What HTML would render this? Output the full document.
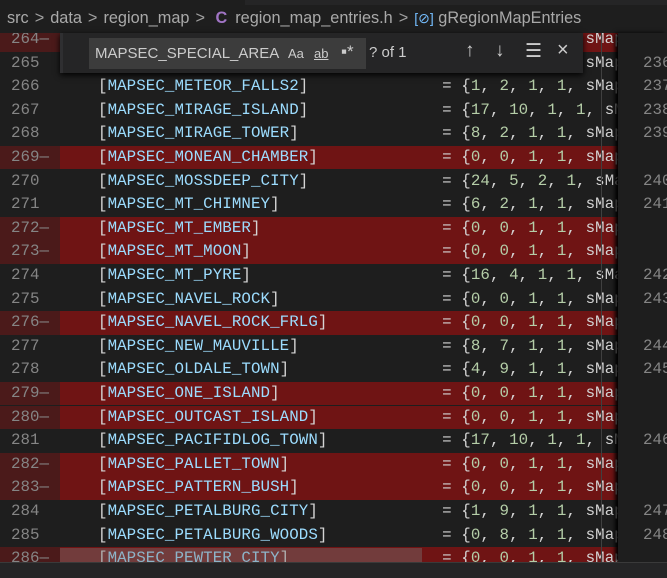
<!DOCTYPE html>
<html><head><meta charset="utf-8"><style>
*{margin:0;padding:0;box-sizing:border-box}
body{width:667px;height:578px;overflow:hidden;background:#1e1e1e;font-family:"Liberation Mono",monospace;position:relative}
#tabs{position:absolute;left:0;top:0;width:667px;height:5px;background:#252526}
#tabs2{position:absolute;left:0;top:0;width:245px;height:5px;background:#1e1e1e}
#bc{position:absolute;left:0;top:0;width:667px;height:33px;font-family:"Liberation Sans",sans-serif;font-size:16.3px;color:#a9a9a9;padding:9px 0 0 7px;white-space:nowrap}
#bc .s{color:#a0a0a0;margin:0 6px}
#bc .c{color:#a074c4;font-weight:bold;margin-right:8px}
#bc .v{color:#75beff;font-size:14px}
#ed{position:absolute;left:0;top:33px;width:618px;height:529px;overflow:hidden}
.row{position:absolute;left:0;width:618px;height:23.6px;font-size:15.8px;line-height:23.6px;white-space:pre;color:#d4d4d4;letter-spacing:0.08px}
.row .g{position:absolute;left:0;top:0;width:60px;height:100%;color:#858585;padding-left:11px;letter-spacing:0}
.row .t{position:absolute;left:98px;top:0}
.row.d{background:#6f1414}
.row.d .g{background:#4b1a1a}
.b{color:#d4d4d4}.i{color:#9cdcfe}.n{color:#b5cea8}
#ruler{position:absolute;left:601px;top:33px;width:1px;height:529px;background:#404040}
#rp{position:absolute;left:618px;top:33px;width:49px;height:529px;background:#1e1e1e;box-shadow:-3px 0 4px #000}
.rn{position:absolute;left:25px;font-size:15.8px;color:#858585;line-height:23.6px}
#find{position:absolute;left:60px;top:33px;width:523px;height:40px;background:#252526;border-left:3px solid #2f2f31;box-shadow:0 2px 6px #000}
#inp{position:absolute;left:26px;top:5px;width:277px;height:31px;background:#3c3c3c;font-family:"Liberation Sans",sans-serif;font-size:15px;color:#cccccc;padding:7px 0 0 6px}
.op{position:absolute;top:11px;font-family:"Liberation Sans",sans-serif;font-size:15px;color:#cccccc}
#sb{position:absolute;left:60px;top:548px;width:362px;height:14px;background:rgba(121,121,121,0.4)}
#hb{position:absolute;left:0;top:562px;width:667px;height:16px;background:#252526;border-top:1px solid #3a3a3a}
</style></head><body>
<div id="bc">src<span class="s">&gt;</span>data<span class="s">&gt;</span>region_map<span class="s">&gt;</span> <span class="c">C</span>region_map_entries.h<span class="s">&gt;</span><span class="v">[⊘]</span> gRegionMapEntries</div>
<div id="tabs"></div><div id="tabs2"></div>
<div id="ed">
<div class="row d" style="top:-5px"><span class="g">264—</span><span class="t">                                    = {0, 0, 1, 1, sMap</span></div>
<div class="row" style="top:18.5px"><span class="g">265</span><span class="t">                                    = {0, 0, 1, 1, sMap</span></div>
<div class="row" style="top:42.1px"><span class="g">266</span><span class="t">[<span class="i">MAPSEC_METEOR_FALLS2</span>]              = {<span class="n">1</span>, <span class="n">2</span>, <span class="n">1</span>, <span class="n">1</span>, sMap</span></div>
<div class="row" style="top:65.7px"><span class="g">267</span><span class="t">[<span class="i">MAPSEC_MIRAGE_ISLAND</span>]              = {<span class="n">17</span>, <span class="n">10</span>, <span class="n">1</span>, <span class="n">1</span>, sMap</span></div>
<div class="row" style="top:89.3px"><span class="g">268</span><span class="t">[<span class="i">MAPSEC_MIRAGE_TOWER</span>]               = {<span class="n">8</span>, <span class="n">2</span>, <span class="n">1</span>, <span class="n">1</span>, sMap</span></div>
<div class="row d" style="top:112.9px"><span class="g">269—</span><span class="t">[<span class="i">MAPSEC_MONEAN_CHAMBER</span>]             = {<span class="n">0</span>, <span class="n">0</span>, <span class="n">1</span>, <span class="n">1</span>, sMap</span></div>
<div class="row" style="top:136.5px"><span class="g">270</span><span class="t">[<span class="i">MAPSEC_MOSSDEEP_CITY</span>]              = {<span class="n">24</span>, <span class="n">5</span>, <span class="n">2</span>, <span class="n">1</span>, sMap</span></div>
<div class="row" style="top:160.1px"><span class="g">271</span><span class="t">[<span class="i">MAPSEC_MT_CHIMNEY</span>]                 = {<span class="n">6</span>, <span class="n">2</span>, <span class="n">1</span>, <span class="n">1</span>, sMap</span></div>
<div class="row d" style="top:183.7px"><span class="g">272—</span><span class="t">[<span class="i">MAPSEC_MT_EMBER</span>]                   = {<span class="n">0</span>, <span class="n">0</span>, <span class="n">1</span>, <span class="n">1</span>, sMap</span></div>
<div class="row d" style="top:207.3px"><span class="g">273—</span><span class="t">[<span class="i">MAPSEC_MT_MOON</span>]                    = {<span class="n">0</span>, <span class="n">0</span>, <span class="n">1</span>, <span class="n">1</span>, sMap</span></div>
<div class="row" style="top:230.9px"><span class="g">274</span><span class="t">[<span class="i">MAPSEC_MT_PYRE</span>]                    = {<span class="n">16</span>, <span class="n">4</span>, <span class="n">1</span>, <span class="n">1</span>, sMap</span></div>
<div class="row" style="top:254.5px"><span class="g">275</span><span class="t">[<span class="i">MAPSEC_NAVEL_ROCK</span>]                 = {<span class="n">0</span>, <span class="n">0</span>, <span class="n">1</span>, <span class="n">1</span>, sMap</span></div>
<div class="row d" style="top:278.1px"><span class="g">276—</span><span class="t">[<span class="i">MAPSEC_NAVEL_ROCK_FRLG</span>]            = {<span class="n">0</span>, <span class="n">0</span>, <span class="n">1</span>, <span class="n">1</span>, sMap</span></div>
<div class="row" style="top:301.7px"><span class="g">277</span><span class="t">[<span class="i">MAPSEC_NEW_MAUVILLE</span>]               = {<span class="n">8</span>, <span class="n">7</span>, <span class="n">1</span>, <span class="n">1</span>, sMap</span></div>
<div class="row" style="top:325.3px"><span class="g">278</span><span class="t">[<span class="i">MAPSEC_OLDALE_TOWN</span>]                = {<span class="n">4</span>, <span class="n">9</span>, <span class="n">1</span>, <span class="n">1</span>, sMap</span></div>
<div class="row d" style="top:348.9px"><span class="g">279—</span><span class="t">[<span class="i">MAPSEC_ONE_ISLAND</span>]                 = {<span class="n">0</span>, <span class="n">0</span>, <span class="n">1</span>, <span class="n">1</span>, sMap</span></div>
<div class="row d" style="top:372.5px"><span class="g">280—</span><span class="t">[<span class="i">MAPSEC_OUTCAST_ISLAND</span>]             = {<span class="n">0</span>, <span class="n">0</span>, <span class="n">1</span>, <span class="n">1</span>, sMap</span></div>
<div class="row" style="top:396.1px"><span class="g">281</span><span class="t">[<span class="i">MAPSEC_PACIFIDLOG_TOWN</span>]            = {<span class="n">17</span>, <span class="n">10</span>, <span class="n">1</span>, <span class="n">1</span>, sMap</span></div>
<div class="row d" style="top:419.7px"><span class="g">282—</span><span class="t">[<span class="i">MAPSEC_PALLET_TOWN</span>]                = {<span class="n">0</span>, <span class="n">0</span>, <span class="n">1</span>, <span class="n">1</span>, sMap</span></div>
<div class="row d" style="top:443.3px"><span class="g">283—</span><span class="t">[<span class="i">MAPSEC_PATTERN_BUSH</span>]               = {<span class="n">0</span>, <span class="n">0</span>, <span class="n">1</span>, <span class="n">1</span>, sMap</span></div>
<div class="row" style="top:466.9px"><span class="g">284</span><span class="t">[<span class="i">MAPSEC_PETALBURG_CITY</span>]             = {<span class="n">1</span>, <span class="n">9</span>, <span class="n">1</span>, <span class="n">1</span>, sMap</span></div>
<div class="row" style="top:490.5px"><span class="g">285</span><span class="t">[<span class="i">MAPSEC_PETALBURG_WOODS</span>]            = {<span class="n">0</span>, <span class="n">8</span>, <span class="n">1</span>, <span class="n">1</span>, sMap</span></div>
<div class="row d" style="top:514.1px"><span class="g">286—</span><span class="t">[<span class="i">MAPSEC_PEWTER_CITY</span>]                = {<span class="n">0</span>, <span class="n">0</span>, <span class="n">1</span>, <span class="n">1</span>, sMap</span></div>
</div>
<div id="ruler"></div>
<div id="rp">
<div class="rn" style="top:18.5px">236</div>
<div class="rn" style="top:42.1px">237</div>
<div class="rn" style="top:65.7px">238</div>
<div class="rn" style="top:89.3px">239</div>
<div class="rn" style="top:136.5px">240</div>
<div class="rn" style="top:160.1px">241</div>
<div class="rn" style="top:230.9px">242</div>
<div class="rn" style="top:254.5px">243</div>
<div class="rn" style="top:301.7px">244</div>
<div class="rn" style="top:325.3px">245</div>
<div class="rn" style="top:396.1px">246</div>
<div class="rn" style="top:466.9px">247</div>
<div class="rn" style="top:490.5px">248</div>
</div>
<div id="find">
<div id="inp">MAPSEC_SPECIAL_AREA
<span class="op" style="left:199px;top:8px;font-size:13px">Aa</span>
<span class="op" style="left:225px;top:8px;font-size:13px;text-decoration:underline">ab</span>
<span class="op" style="left:252px;top:4px;font-size:17px">▪*</span>
</div>
<span class="op" style="left:306px">? of 1</span>
<span class="op" style="left:402px;top:7px;font-size:19px">↑</span>
<span class="op" style="left:432px;top:7px;font-size:19px">↓</span>
<span class="op" style="left:462px;top:7px;font-size:19px">☰</span>
<span class="op" style="left:494px;top:6px;font-size:20px">×</span>
</div>
<div id="sb"></div>
<div id="hb"></div>
</body></html>
